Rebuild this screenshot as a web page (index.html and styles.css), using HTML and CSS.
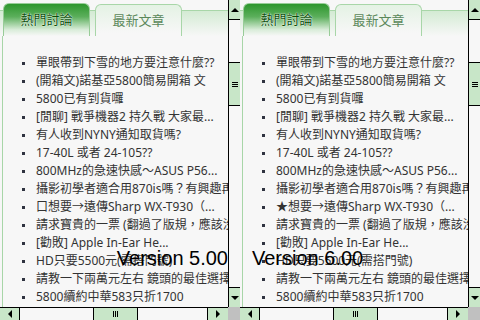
FILE: index.html
```html
<!DOCTYPE html>
<html lang="zh-Hant">
<head>
    <meta charset="UTF-8">
    <title>熱門討論</title>
    <link rel="stylesheet" href="styles.css">
</head>
<body>
<div class="screens">

    <!-- Version 5.00 -->
    <div class="panel">
        <div class="view">
            <div class="tabs">
                <div class="tab active">熱門討論</div>
                <div class="tab idle">最新文章</div>
            </div>
            <ul class="list">
                <li>單眼帶到下雪的地方要注意什麼??</li>
                <li>(開箱文)諾基亞5800簡易開箱 文</li>
                <li>5800已有到貨囉</li>
                <li>[閒聊] 戰爭機器2 持久戰 大家最...</li>
                <li>有人收到NYNY通知取貨嗎?</li>
                <li>17-40L 或者 24-105??</li>
                <li>800MHz的急速快感～ASUS P56...</li>
                <li>攝影初學者適合用870is嗎？有興趣再來</li>
                <li>口想要→遠傳Sharp WX-T930（...</li>
                <li>請求寶貴的一票 (翻過了版規，應該沒問題)</li>
                <li>[勸敗] Apple In-Ear He...</li>
                <li>HD只要5500元(需搭門號)</li>
                <li>請教一下兩萬元左右 鏡頭的最佳選擇</li>
                <li>5800續約中華583只折1700</li>
            </ul>
        </div>
        <div class="vbar">
            <div class="btn up"><span class="tri tri-up"></span></div>
            <div class="track-top"></div>
            <div class="btn vthumb"><span class="grip-v"></span></div>
            <div class="fill"></div>
            <div class="btn down"><span class="tri tri-down"></span></div>
        </div>
        <div class="hbar">
            <div class="btn left"><span class="tri tri-left"></span></div>
            <div class="track-left"></div>
            <div class="btn hthumb"><span class="grip-h"></span></div>
            <div class="fill"></div>
            <div class="btn right"><span class="tri tri-right"></span></div>
        </div>
        <div class="corner"></div>
        <div class="version v5">Version 5.00</div>
    </div>

    <!-- Version 6.00 -->
    <div class="panel">
        <div class="view">
            <div class="tabs">
                <div class="tab active">熱門討論</div>
                <div class="tab idle">最新文章</div>
            </div>
            <ul class="list">
                <li>單眼帶到下雪的地方要注意什麼??</li>
                <li>(開箱文)諾基亞5800簡易開箱 文</li>
                <li>5800已有到貨囉</li>
                <li>[閒聊] 戰爭機器2 持久戰 大家最...</li>
                <li>有人收到NYNY通知取貨嗎?</li>
                <li>17-40L 或者 24-105??</li>
                <li>800MHz的急速快感～ASUS P56...</li>
                <li>攝影初學者適合用870is嗎？有興趣再來</li>
                <li>★想要→遠傳Sharp WX-T930（...</li>
                <li>請求寶貴的一票 (翻過了版規，應該沒問題)</li>
                <li>[勸敗] Apple In-Ear He...</li>
                <li>HD只要5500元(需搭門號)</li>
                <li>請教一下兩萬元左右 鏡頭的最佳選擇</li>
                <li>5800續約中華583只折1700</li>
            </ul>
        </div>
        <div class="vbar">
            <div class="btn up"><span class="tri tri-up"></span></div>
            <div class="track-top"></div>
            <div class="btn vthumb"><span class="grip-v"></span></div>
            <div class="fill"></div>
            <div class="btn down"><span class="tri tri-down"></span></div>
        </div>
        <div class="hbar">
            <div class="btn left"><span class="tri tri-left"></span></div>
            <div class="track-left"></div>
            <div class="btn hthumb"><span class="grip-h"></span></div>
            <div class="fill"></div>
            <div class="btn right"><span class="tri tri-right"></span></div>
        </div>
        <div class="corner"></div>
        <div class="version v6">Version 6.00</div>
    </div>

</div>
</body>
</html>
```

FILE: styles.css
```css
*, *:before, *:after {
    box-sizing: border-box;
    padding: 0;
    margin: 0;
}

body {
    background: #f7f7f7;
    overflow: hidden;
    font-family: "Noto Sans", "Noto Sans CJK TC", sans-serif;
}

.screens {
    display: flex;
}

.panel {
    position: relative;
    width: 240px;
    height: 320px;
    display: grid;
    grid-template-columns: 228px 12px;
    grid-template-rows: 307px 13px;
    background: #f7f7f7;
}

.view {
    display: flex;
    flex-direction: column;
    overflow: hidden;
}

/* tab strip */
.tabs {
    display: flex;
    gap: 5px;
    height: 36px;
    padding: 3px 0 0 3px;
    background: linear-gradient(to bottom, transparent 10px, #a8d6a8 10px, #a8d6a8 11px, #d3ebd3 11px, #f7f7f7 36px);
}

.tab {
    width: 87px;
    height: 33px;
    border: 1px solid #a8d6a8;
    border-bottom: 0;
    border-radius: 6px 6px 0 0;
    padding-top: 6px;
    line-height: 18px;
    font-size: 13px;
    text-align: center;
    font-family: "Noto Sans CJK TC", sans-serif;
}

.tab.active {
    border-color: #98cc98;
    background: linear-gradient(to bottom, #2d962d 0%, #5caf5c 40%, #d8ecd8 80%, #f7f7f7 100%);
    color: #0b4f0b;
    text-shadow: 0 0 2px #fff, 0 0 1px #fff;
}

.tab.idle {
    margin-top: 1px;
    height: 32px;
    background: linear-gradient(to bottom, #e4f2e4 0%, #f7f7f7 90%);
    color: #5a885a;
}

/* list */
.list {
    flex: 1;
    list-style: none;
    margin-left: 2px;
    border-left: 1px solid #a8d6a8;
    padding-top: 18px;
}

.list li {
    position: relative;
    padding-left: 33px;
    line-height: 18px;
    font-size: 12px;
    color: #333;
    white-space: nowrap;
}

.list li:before {
    content: "";
    position: absolute;
    left: 19px;
    top: 8px;
    width: 3px;
    height: 3px;
    background: #2f3340;
}

/* scroll bars */
.btn {
    background: #c8e6c8;
    display: flex;
    align-items: center;
    justify-content: center;
}

.vbar {
    display: flex;
    flex-direction: column;
    border-left: 1px solid #000;
}

.vbar .up {
    height: 20px;
    border-bottom: 1px solid #000;
}

.track-top {
    height: 42px;
}

.vthumb {
    height: 44px;
    border-top: 1px solid #000;
    border-bottom: 1px solid #000;
}

.fill {
    flex: 1;
}

.vbar .down {
    height: 20px;
    border-top: 1px solid #000;
}

.hbar {
    display: flex;
    border-top: 1px solid #000;
}

.hbar .left {
    width: 20px;
    border-right: 1px solid #000;
}

.track-left {
    width: 73px;
}

.hthumb {
    width: 45px;
    border-left: 1px solid #000;
    border-right: 1px solid #000;
}

.hbar .right {
    width: 21px;
    border-left: 1px solid #000;
}

.corner {
    background: #c0c0c0;
}

.tri {
    width: 0;
    height: 0;
    border: 4px solid transparent;
}

.tri-up {
    border-top: 0;
    border-bottom-color: #000;
}

.tri-down {
    border-bottom: 0;
    border-top-color: #000;
}

.tri-left {
    border-left: 0;
    border-right-color: #000;
}

.tri-right {
    border-right: 0;
    border-left-color: #000;
}

.grip-v {
    width: 6px;
    height: 5px;
    background: repeating-linear-gradient(to bottom, #000 0, #000 1px, transparent 1px, transparent 2px);
}

.grip-h {
    width: 5px;
    height: 6px;
    background: repeating-linear-gradient(to right, #000 0, #000 1px, transparent 1px, transparent 2px);
}

/* version caption over the screen */
.version {
    position: absolute;
    top: 248px;
    font-family: "Liberation Sans", sans-serif;
    font-size: 20px;
    line-height: 21px;
    color: #000;
    white-space: nowrap;
}

.v5 {
    right: 12px;
}

.v6 {
    left: 12px;
}
```
